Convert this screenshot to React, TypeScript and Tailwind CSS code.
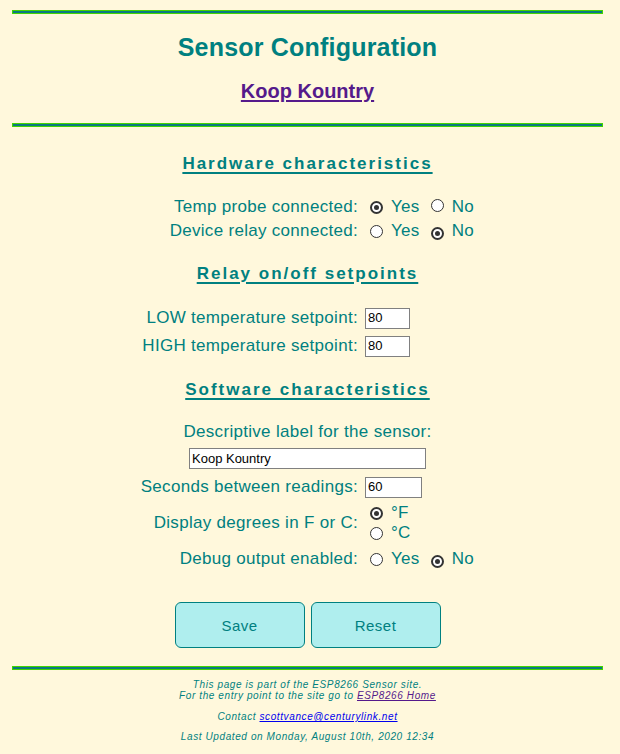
import React from "react";

const Hr = () => (
  <div className="h-[4px] w-full border border-[#44d400] bg-[#0a7a80]" />
);

const Radio = ({ checked }: { checked?: boolean }) => (
  <span
    className={
      "inline-flex h-[13px] w-[13px] shrink-0 items-center justify-center rounded-full bg-white " +
      (checked ? "border-2 border-[#333]" : "border border-[#333]")
    }
  >
    {checked && <span className="h-[5px] w-[5px] rounded-full bg-[#333]" />}
  </span>
);

const Heading = ({ children, className }: { children: React.ReactNode; className?: string }) => (
  <div className={"flex justify-center " + (className || "")}>
    <span className="text-[17px] font-bold leading-[20px] tracking-[2px] underline decoration-[2px] underline-offset-[3px]">
      {children}
    </span>
  </div>
);

const Row = ({ label, children, className }: { label: string; children: React.ReactNode; className?: string }) => (
  <div className={"grid grid-cols-[346px_1fr] items-center " + (className || "")}>
    <div className="text-right text-[17px] leading-[24px] tracking-[0.3px]">{label}</div>
    <div className="flex items-center">{children}</div>
  </div>
);

const YesNo = ({ yes }: { yes: boolean }) => (
  <div className="ml-[12px] flex items-center text-[17px] leading-[24px] tracking-[0.3px]">
    <Radio checked={yes} />
    <span className="ml-[8px]">Yes</span>
    <span className="ml-[11px]">
      <Radio checked={!yes} />
    </span>
    <span className="ml-[8px]">No</span>
  </div>
);

const Input = ({ value, w }: { value: string; w: string }) => (
  <div
    className={
      "flex h-[21px] items-center border border-[#808080] bg-white pl-[2px] font-['Liberation_Sans',Arial,sans-serif] text-[13px] tracking-normal text-black " +
      w
    }
  >
    {value}
  </div>
);

export default function App() {
  return (
    <div className="min-h-screen bg-[#fff8dc] font-['Liberation_Sans',Arial,sans-serif] text-[#008080]">
      <div className="ml-[12px] w-[591px] pt-[10px] pb-[10px]">
        <Hr />
        <div className="mt-[19px] text-center text-[25px] font-bold leading-[29px] tracking-[0.2px]">Sensor Configuration</div>
        <div className="mt-[18px] text-center text-[20px] font-bold leading-[23px]">
          <span className="text-[#551a8b] underline decoration-[2px] underline-offset-[2px]">Koop Kountry</span>
        </div>
        <div className="mt-[20px]">
          <Hr />
        </div>

        <Heading className="mt-[27px]">Hardware characteristics</Heading>
        <Row label="Temp probe connected:" className="mt-[21px]">
          <YesNo yes={true} />
        </Row>
        <Row label="Device relay connected:">
          <YesNo yes={false} />
        </Row>

        <Heading className="mt-[21px]">Relay on/off setpoints</Heading>
        <Row label="LOW temperature setpoint:" className="mt-[20px] h-[28px]">
          <div className="ml-[7px]">
            <Input value="80" w="w-[45px]" />
          </div>
        </Row>
        <Row label="HIGH temperature setpoint:" className="h-[28px]">
          <div className="ml-[7px]">
            <Input value="80" w="w-[45px]" />
          </div>
        </Row>

        <Heading className="mt-[20px]">Software characteristics</Heading>
        <div className="mt-[21px] text-center text-[17px] leading-[22px] tracking-[0.3px]">
          Descriptive label for the sensor:
        </div>
        <div className="mt-[5px] flex justify-center">
          <Input value="Koop Kountry" w="w-[237px]" />
        </div>
        <Row label="Seconds between readings:" className="mt-[6px] h-[21px]">
          <div className="ml-[7px]">
            <Input value="60" w="w-[57px]" />
          </div>
        </Row>
        <Row label="Display degrees in F or C:" className="mt-[7px] h-[40px]">
          <div className="ml-[12px] flex flex-col text-[17px] leading-[20px] tracking-[0.3px]">
            <div className="flex items-center">
              <Radio checked />
              <span className="ml-[8px]">°F</span>
            </div>
            <div className="flex items-center">
              <Radio />
              <span className="ml-[8px]">°C</span>
            </div>
          </div>
        </Row>
        <Row label="Debug output enabled:" className="mt-[4px]">
          <YesNo yes={false} />
        </Row>

        <div className="mt-[31px] flex justify-center gap-[6px]">
          <button className="h-[46px] w-[130px] rounded-[6px] border border-[#008080] bg-[#afeeee] pt-[3px] text-[15px] tracking-[0.5px] text-[#008080]">
            Save
          </button>
          <button className="h-[46px] w-[130px] rounded-[6px] border border-[#008080] bg-[#afeeee] pt-[3px] text-[15px] tracking-[0.5px] text-[#008080]">
            Reset
          </button>
        </div>

        <div className="mt-[18px]">
          <Hr />
        </div>

        <div className="mt-[9px] text-center text-[10px] italic leading-[11px] tracking-[0.6px]">
          <div>This page is part of the ESP8266 Sensor site.</div>
          <div>
            For the entry point to the site go to{" "}
            <span className="text-[#551a8b] underline">ESP8266 Home</span>
          </div>
          <div className="mt-[10px]">
            Contact <span className="text-[#0000ee] underline">scottvance@centurylink.net</span>
          </div>
          <div className="mt-[9px]">Last Updated on Monday, August 10th, 2020 12:34</div>
        </div>
      </div>
    </div>
  );
}
